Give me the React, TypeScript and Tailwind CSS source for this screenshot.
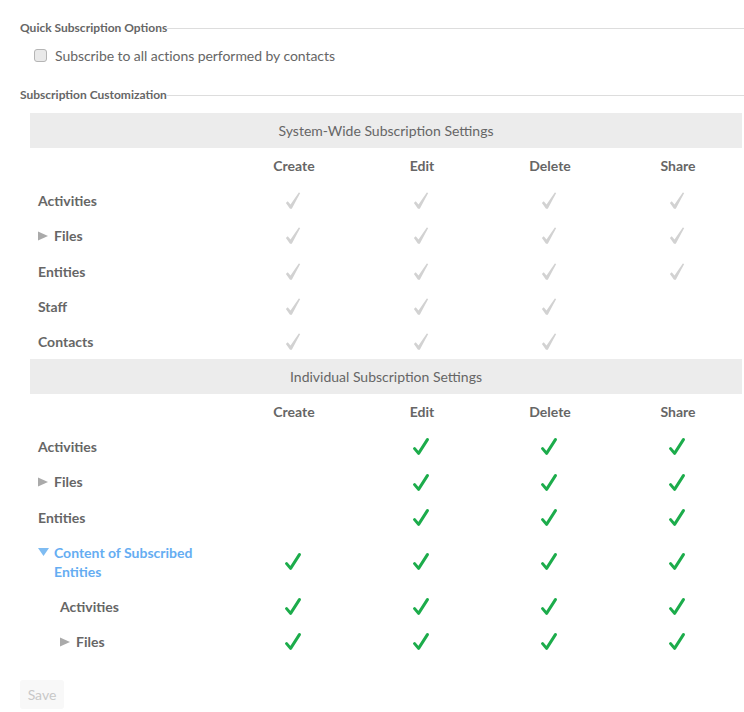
const GreyCheck = () => (
  <svg width="16" height="18" viewBox="0 0 16 18" className="block">
    <polygon points="0.9,11 2.7,9.2 5.5,12.4 13.8,0.4 15.2,1 6.8,16.8 5,16.8" fill="#d2d2d2" />
  </svg>
);
const GreenCheck = () => (
  <svg width="16" height="18" viewBox="0 0 16 18" className="block">
    <polyline points="1.6,10.6 5.6,15.4 14.4,1.6" fill="none" stroke="#1cac4b" strokeWidth="3" strokeLinecap="round" strokeLinejoin="round" />
  </svg>
);
const Caret = ({ open }: { open?: boolean }) =>
  open ? (
    <svg width="11" height="8" viewBox="0 0 11 8" className="block shrink-0">
      <polygon points="0,0 11,0 5.5,8" fill="#7fbcf2" />
    </svg>
  ) : (
    <svg width="10" height="10" viewBox="0 0 10 10" className="block shrink-0">
      <polygon points="0,0.5 10,5 0,9.5" fill="#aaaaaa" />
    </svg>
  );

type Cols = [boolean, boolean, boolean, boolean];

const Cells = ({ cols, green }: { cols: Cols; green?: boolean }) => (
  <>
    {cols.map((on, i) => (
      <div key={i} className="w-[128px] flex justify-center pr-[2px] pt-[1px]">
        {on ? green ? <GreenCheck /> : <GreyCheck /> : null}
      </div>
    ))}
  </>
);

const Row = ({ label, cols, green, caret, indent }: { label: string; cols: Cols; green?: boolean; caret?: boolean; indent?: boolean }) => (
  <div className="flex items-center h-[35.2px]">
    <div className={`w-[200px] flex items-center gap-[6px] font-bold leading-[19.2px] ${indent ? "pl-[30px]" : "pl-2"}`}>
      {caret && <Caret />}
      <span>{label}</span>
    </div>
    <Cells cols={cols} green={green} />
  </div>
);

const Band = ({ children }: { children: string }) => (
  <div className="bg-[#ececec] h-[35px] flex items-center justify-center leading-[19.2px]">{children}</div>
);

const Heads = ({ first }: { first?: boolean }) => (
  <div className={`flex items-center font-bold leading-[19.2px] ${first ? "h-[35.2px]" : "h-[35.1px]"}`}>
    <div className="w-[200px]" />
    {["Create", "Edit", "Delete", "Share"].map((h) => (
      <div key={h} className="w-[128px] text-center">{h}</div>
    ))}
  </div>
);

const Section = ({ children }: { children: string }) => (
  <div className="flex items-center text-[12px] font-bold leading-[16px]">
    <span>{children}</span>
    <div className="flex-1 h-px bg-[#dddddd]" />
  </div>
);

export default function App() {
  const t: Cols = [true, true, true, true];
  const n: Cols = [true, true, true, false];
  const e: Cols = [false, true, true, true];
  return (
    <div className="w-[744px] h-[712px] bg-white overflow-hidden pl-5 pt-5 text-[14px] text-[#666666] font-['Lato','Noto_Sans',sans-serif]">
      <Section>Quick Subscription Options</Section>
      <label className="flex items-center gap-2 pl-[14px] mt-[9px] h-[20px]">
        <span className="w-[13px] h-[13px] rounded-[3px] bg-[#e9e9e9] border border-[#b5b5b5] shrink-0" />
        <span className="tracking-[-0.06px]">Subscribe to all actions performed by contacts</span>
      </label>
      <div className="mt-[22px]">
        <Section>Subscription Customization</Section>
      </div>
      <div className="ml-[10px] mt-[10px] w-[712px]">
        <Band>System-Wide Subscription Settings</Band>
        <Heads first />
        <Row label="Activities" cols={t} />
        <Row label="Files" cols={t} caret />
        <Row label="Entities" cols={t} />
        <Row label="Staff" cols={n} />
        <Row label="Contacts" cols={n} />
        <Band>Individual Subscription Settings</Band>
        <Heads />
        <Row label="Activities" cols={e} green />
        <Row label="Files" cols={e} green caret />
        <Row label="Entities" cols={e} green />
        <div className="flex items-center py-2">
          <div className="w-[200px] flex items-start gap-[5px] pl-2 font-bold leading-[19.2px] text-[#65adf2]">
            <span className="mt-[5px]"><Caret open /></span>
            <span className="pr-8">Content of Subscribed Entities</span>
          </div>
          <Cells cols={t} green />
        </div>
        <Row label="Activities" cols={t} green indent />
        <Row label="Files" cols={t} green caret indent />
      </div>
      <button className="mt-[20px] h-[29px] w-[44px] rounded-[3px] bg-[#f8f8f8] text-[#c8c8c8] text-[14px] block">Save</button>
    </div>
  );
}
